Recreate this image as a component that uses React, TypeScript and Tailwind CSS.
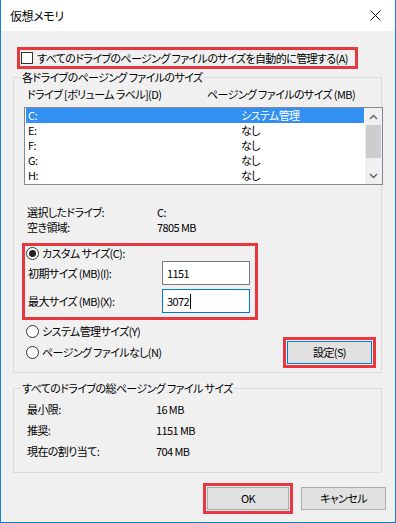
import React from "react";

const font = "font-['Noto_Sans_CJK_JP','Noto_Sans',sans-serif] [font-feature-settings:'palt']";

function Radio({ checked }: { checked?: boolean }) {
  return (
    <span className="w-[13px] h-[13px] rounded-full border border-[#333] bg-white flex items-center justify-center shrink-0">
      {checked && <span className="w-[7px] h-[7px] rounded-full bg-[#222]" />}
    </span>
  );
}

function Chevron({ up }: { up?: boolean }) {
  return (
    <svg width="9" height="6" viewBox="0 0 9 6">
      <polyline
        points={up ? "1,5 4.5,1.5 8,5" : "1,1 4.5,4.5 8,1"}
        fill="none"
        stroke="#606060"
        strokeWidth="1.4"
      />
    </svg>
  );
}

const drives = [
  { d: "C:", s: "システム管理", sel: true },
  { d: "E:", s: "なし" },
  { d: "F:", s: "なし" },
  { d: "G:", s: "なし" },
  { d: "H:", s: "なし" },
];

export default function App() {
  return (
    <div className={`w-[396px] h-[523px] bg-[#f0f0f0] border-l border-r border-b border-[#1a7fd4] flex flex-col text-[11px] tracking-[-0.6px] text-black ${font}`}>
      {/* title bar */}
      <div className="h-[31px] bg-white flex items-center justify-between pl-[9px] pr-[10px] shrink-0">
        <span className="text-[12px] tracking-[-0.4px] leading-[15px]">仮想メモリ</span>
        <svg width="11" height="11" viewBox="0 0 11 11" className="mr-[4px]">
          <line x1="0.5" y1="0.5" x2="10.5" y2="10.5" stroke="#111" strokeWidth="1" />
          <line x1="10.5" y1="0.5" x2="0.5" y2="10.5" stroke="#111" strokeWidth="1" />
        </svg>
      </div>

      {/* auto-manage checkbox */}
      <div className="mt-[16px] ml-[16px] w-[341px] h-[22px] border-[3px] border-[#e8383d] flex items-center">
        <span className="ml-[1px] w-[12px] h-[12px] border border-[#333] bg-white shrink-0" />
        <span className="ml-[4px] leading-[15px] whitespace-nowrap">すべてのドライブのページング ファイルのサイズを自動的に管理する(A)</span>
      </div>

      {/* group 1 */}
      <div className="mt-[8px] ml-[12px] w-[369px] border border-[#dcdcdc] flex flex-col pb-[4px]">
        <span className="-mt-[8px] ml-[7px] px-[1px] w-fit h-[15px] leading-[15px] bg-[#f0f0f0]">各ドライブのページング ファイルのサイズ</span>
        <div className="mt-[2px] h-[15px] leading-[15px] flex pl-[13px] whitespace-nowrap">
          <span className="w-[180px]">ドライブ [ボリューム ラベル](D)</span>
          <span>ページング ファイルのサイズ (MB)</span>
        </div>
        {/* list */}
        <div className="mt-[5px] ml-[10px] w-[359px] h-[78px] border border-[#828790] bg-white flex">
          <div className="flex-1 flex flex-col">
            {drives.map((r) => (
              <div
                key={r.d}
                className={`h-[15px] leading-[15px] flex mx-[1px] pl-[2px] ${r.sel ? "bg-[#3390f0] text-white" : ""}`}
              >
                <span className="w-[213px]">{r.d}</span>
                <span>{r.s}</span>
              </div>
            ))}
          </div>
          <div className="w-[17px] bg-[#f0f0f0] flex flex-col">
            <div className="h-[17px] flex items-center justify-center"><Chevron up /></div>
            <div className="h-[33px] mx-[1px] bg-[#cdcdcd]" />
            <div className="flex-1" />
            <div className="h-[17px] flex items-center justify-center"><Chevron /></div>
          </div>
        </div>
        {/* selected drive info */}
        <div className="mt-[20px] pl-[13px] flex flex-col">
          <div className="h-[15px] leading-[15px] flex"><span className="w-[130px]">選択したドライブ:</span><span>C:</span></div>
          <div className="h-[15px] leading-[15px] flex"><span className="w-[130px]">空き領域:</span><span>7805 MB</span></div>
        </div>
        {/* custom size red box */}
        <div className="mt-[8px] ml-[8px] w-[236px] h-[77px] border-[3px] border-[#e8383d] flex flex-col">
          <div className="h-[15px] flex items-center pl-[1px]">
            <Radio checked />
            <span className="ml-[3px] leading-[15px]">カスタム サイズ(C):</span>
          </div>
          <div className="h-[24px] flex items-center pl-[3px]">
            <span className="w-[134px]">初期サイズ (MB)(I):</span>
            <div className="w-[88px] h-[24px] border border-[#7a7a7a] bg-white flex items-center pl-[4px]">1151</div>
          </div>
          <div className="mt-[4px] h-[24px] flex items-center pl-[3px]">
            <span className="w-[134px]">最大サイズ (MB)(X):</span>
            <div className="w-[88px] h-[24px] border border-[#0078d7] bg-white flex items-center pl-[4px]">
              3072<span className="ml-[1px] w-[1px] h-[15px] bg-black" />
            </div>
          </div>
        </div>
        {/* radios + set button */}
        <div className="mt-[4px] flex items-start">
          <div className="w-[269px] pl-[12px] flex flex-col gap-[6px]">
            <div className="h-[15px] flex items-center">
              <Radio />
              <span className="ml-[3px] leading-[15px]">システム管理サイズ(Y)</span>
            </div>
            <div className="h-[15px] flex items-center">
              <Radio />
              <span className="ml-[3px] leading-[15px]">ページング ファイルなし(N)</span>
            </div>
          </div>
          <div className="mt-[13px] w-[93px] h-[31px] border-[3px] border-[#e8383d] p-[1px]">
            <div className="w-full h-full border border-[#0078d7] bg-[#e1e1e1] flex items-center justify-center">
              設定(S)
            </div>
          </div>
        </div>
      </div>

      {/* group 2 */}
      <div className="mt-[15px] ml-[12px] w-[369px] border border-[#dcdcdc] flex flex-col pb-[10px]">
        <span className="-mt-[8px] ml-[7px] px-[1px] w-fit h-[15px] leading-[15px] bg-[#f0f0f0]">すべてのドライブの総ページング ファイル サイズ</span>
        <div className="mt-[3px] pl-[13px] flex flex-col">
          <div className="h-[21px] flex items-center"><span className="w-[129px]">最小限:</span><span>16 MB</span></div>
          <div className="h-[21px] flex items-center"><span className="w-[129px]">推奨:</span><span>1151 MB</span></div>
          <div className="h-[21px] flex items-center"><span className="w-[129px]">現在の割り当て:</span><span>704 MB</span></div>
        </div>
      </div>

      {/* bottom buttons */}
      <div className="mt-[10px] flex justify-end items-center pr-[9px] gap-[8px]">
        <div className="w-[90px] h-[31px] border-[3px] border-[#e8383d] p-[1px]">
          <div className="w-full h-full border border-[#adadad] bg-[#e1e1e1] flex items-center justify-center">OK</div>
        </div>
        <div className="w-[85px] h-[23px] border border-[#adadad] bg-[#e1e1e1] flex items-center justify-center">キャンセル</div>
      </div>
    </div>
  );
}
